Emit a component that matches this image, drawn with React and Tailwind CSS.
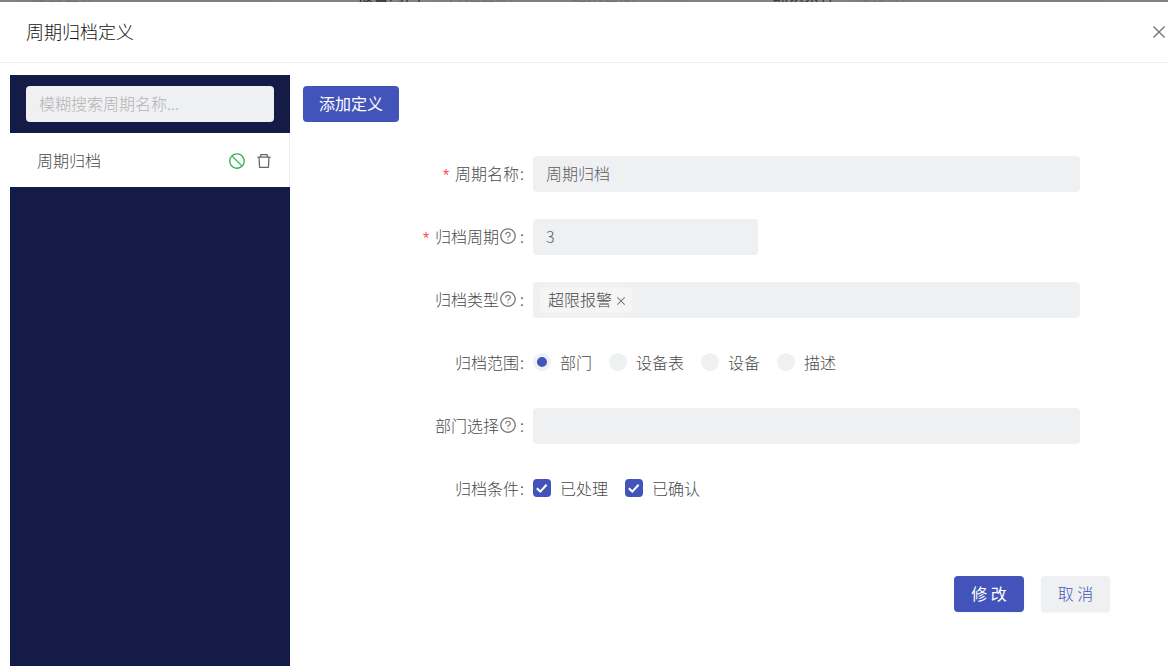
import { useState } from 'react'
import {
  AiOutlineCalendar, AiOutlineClose, AiOutlineDelete, AiOutlineQuestionCircle, AiOutlineStop,
} from 'react-icons/ai'

const SCOPES = ['部门', '设备表', '设备', '描述']
const CONDITIONS = ['已处理', '已确认']

const FIELD = 'h-9 rounded bg-[#eff0f2] px-[13px] pb-0.5 text-[#5c5c5c] outline-none'

// bottom edge of the dimmed filter bar that stays visible behind the drawer
function Backdrop() {
  return (
    <div aria-hidden="true" className="flex h-0.5 items-end overflow-hidden bg-[#838283] text-base leading-4 text-[#6c6c6c]">
      <span className="ml-4 w-[258px] shrink-0 bg-[#7f7f80] pl-[15px]">报警名称</span>
      <span className="ml-[83px] shrink-0 font-normal text-[#333333]">报警时间</span>
      <span className="ml-3 flex w-[257px] shrink-0 items-end bg-[#7f7f80] pl-[15px]">
        <span className="w-[123px]">开始日期</span>
        <span className="w-[91px]">结束日期</span>
        <AiOutlineCalendar className="size-4" />
      </span>
      <span className="ml-[82px] shrink-0 font-normal text-[#333333]">确认条件</span>
      <span className="ml-3 w-[257px] shrink-0 bg-[#7f7f80] pl-[13px]">请选择</span>
    </div>
  )
}

function FormRow({ label, htmlFor, required, help, children }) {
  return (
    <div className="flex h-9 items-center">
      <div className="flex w-[230px] shrink-0 items-center justify-end pr-[9px] pb-0.5">
        {required && <span className="mt-2 mr-1 font-['Liberation_Mono'] leading-4 text-[#ff4d4f]">*</span>}
        <label htmlFor={htmlFor}>{label}</label>
        {help && <AiOutlineQuestionCircle className="size-[18px] text-[#7a7a7a]" />}
        <span className={help ? 'ml-[3px]' : 'ml-px'}>:</span>
      </div>
      {children}
    </div>
  )
}

function Radio({ label, checked, onChange }) {
  return (
    <label className="flex items-center gap-[9px]">
      <input
        type="radio" name="scope" checked={checked} onChange={onChange}
        className="size-[18px] appearance-none rounded-full border-4 border-[#eff0f2] bg-[#eff0f2] checked:bg-[#4254ba]"
      />
      {label}
    </label>
  )
}

function Checkbox({ label }) {
  return (
    <label className="flex items-center gap-[9px]">
      <span className="grid size-[18px] place-items-center *:col-start-1 *:row-start-1">
        <input
          type="checkbox" defaultChecked
          className="peer size-[18px] appearance-none rounded bg-[#eff0f2] checked:bg-[#4254ba]"
        />
        <svg viewBox="0 0 18 18" className="pointer-events-none hidden size-[18px] peer-checked:block">
          <path d="M3.8 9.2 7.3 12.6 13.6 5.8" fill="none" stroke="#fff" strokeWidth="2.1" />
        </svg>
      </span>
      {label}
    </label>
  )
}

function Sidebar() {
  return (
    <aside className="flex w-[280px] shrink-0 flex-col bg-[#131b46]">
      <div className="px-4 py-[11px]">
        <input
          type="search" aria-label="模糊搜索周期名称" placeholder="模糊搜索周期名称..."
          className="block h-9 w-full rounded bg-[#eff0f2] px-[13px] pb-0.5 outline-none placeholder:text-[#b4b4b4]"
        />
      </div>
      <div className="flex h-[54px] items-center border-r border-[#f0f0f0] bg-white pr-4 pl-[27px]">
        <span className="flex-1">周期归档</span>
        <button type="button" aria-label="停用" className="mr-[9px] pt-px text-[#2fb055]">
          <AiOutlineStop className="size-[18px]" />
        </button>
        <button type="button" aria-label="删除" className="pt-px text-[#666666]">
          <AiOutlineDelete className="size-[18px]" />
        </button>
      </div>
    </aside>
  )
}

export default function App() {
  const [scope, setScope] = useState('部门')

  return (
    <div className="flex min-h-screen flex-col bg-white font-['Noto_Sans_CJK_SC',sans-serif] text-base leading-6 font-light text-[#4a4a4a]">
      <Backdrop />
      <header className="flex h-[61px] items-center justify-between border-b border-[#f0f0f0] pl-[26px]">
        <h1 className="pb-0.5 text-lg font-light text-[#111111]">周期归档定义</h1>
        <button type="button" aria-label="关闭" className="text-[#7a7a7a]">
          <AiOutlineClose className="size-[18px]" />
        </button>
      </header>

      <div className="flex flex-1 pt-3 pl-2.5">
        <Sidebar />
        <main className="min-w-0 flex-1 pt-[11px] pl-[13px]">
          <button type="button" className="h-9 rounded bg-[#4254ba] px-4 pb-0.5 font-normal text-white">添加定义</button>

          <form className="mt-[34px]" onSubmit={e => e.preventDefault()}>
            <div className="flex flex-col gap-[27px] pr-[88px]">
              <FormRow label="周期名称" htmlFor="name" required>
                <input id="name" defaultValue="周期归档" className={`${FIELD} min-w-0 flex-1`} />
              </FormRow>
              <FormRow label="归档周期" htmlFor="period" required help>
                <input id="period" defaultValue="3" className={`${FIELD} w-[225px]`} />
              </FormRow>
              <FormRow label="归档类型" help>
                <div className="flex h-9 flex-1 items-center rounded bg-[#eff0f2] px-[7px]">
                  <span className="flex h-[26px] items-center gap-[3px] rounded bg-[#f5f5f5] pr-[5px] pb-0.5 pl-2">
                    超限报警
                    <button type="button" aria-label="移除超限报警" className="pt-[3px] text-[#777777]">
                      <AiOutlineClose className="size-3" />
                    </button>
                  </span>
                </div>
              </FormRow>
              <FormRow label="归档范围">
                <div className="flex gap-[17px] pb-0.5">
                  {SCOPES.map(s => (
                    <Radio key={s} label={s} checked={scope === s} onChange={() => setScope(s)} />
                  ))}
                </div>
              </FormRow>
              <FormRow label="部门选择" htmlFor="dept" help>
                <input id="dept" className={`${FIELD} min-w-0 flex-1`} />
              </FormRow>
              <FormRow label="归档条件">
                <div className="flex gap-[17px] pb-0.5">
                  {CONDITIONS.map(c => <Checkbox key={c} label={c} />)}
                </div>
              </FormRow>
            </div>

            <div className="mt-[69px] flex justify-end gap-[17px] pr-[58px]">
              <button type="submit" className="h-9 w-[70px] rounded bg-[#4254ba] pb-0.5 font-normal text-white shadow-xs">修 改</button>
              <button type="button" className="h-9 w-[69px] rounded bg-[#eff0f2] pb-0.5 text-[#4254ba] shadow-xs">取 消</button>
            </div>
          </form>
        </main>
      </div>
    </div>
  )
}
